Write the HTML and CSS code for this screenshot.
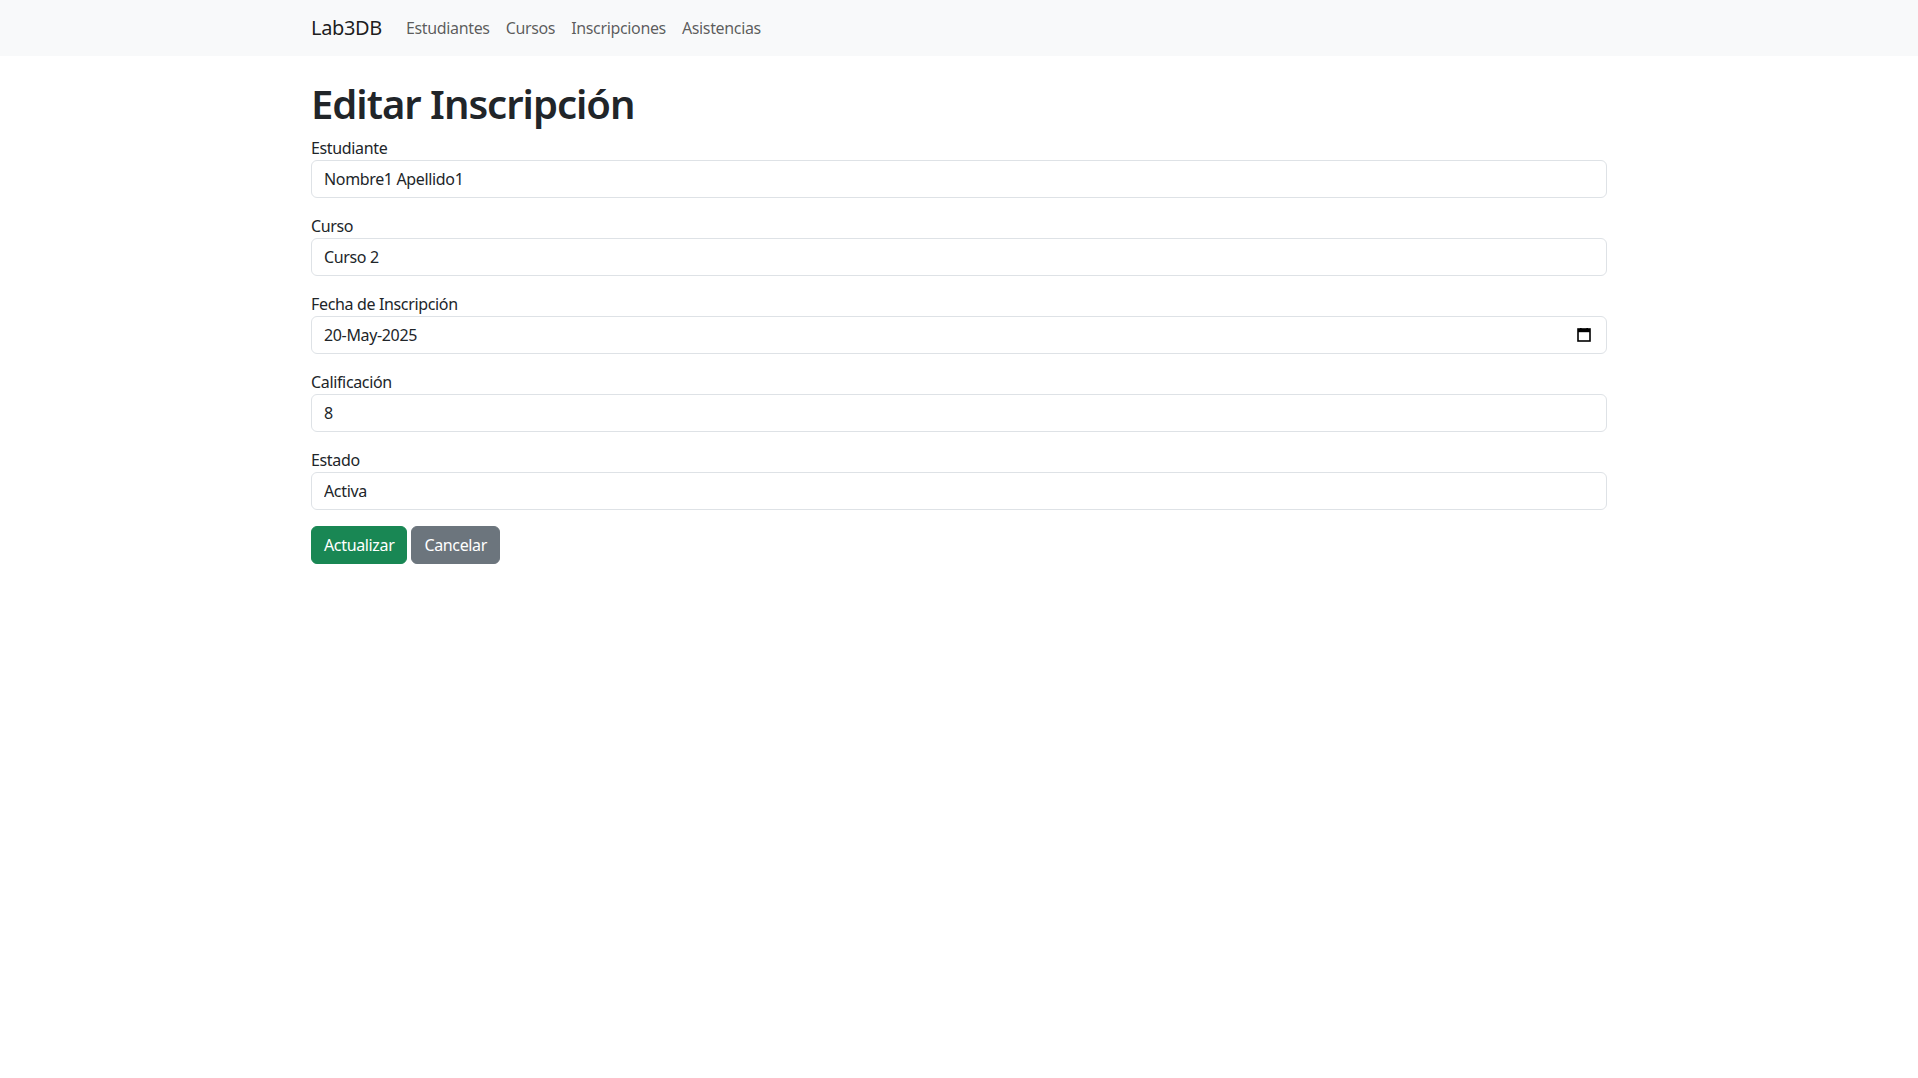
FILE: index.html
```html
<!DOCTYPE html>
<html lang="es">
<head>
<meta charset="utf-8">
<title>Editar Inscripción - Lab3DB</title>
<link rel="stylesheet" href="styles.css">
</head>
<body>
<nav class="navbar">
  <div class="container nav-inner">
    <a class="brand" href="#">Lab3DB</a>
    <ul class="nav-links">
      <li><a href="#">Estudiantes</a></li>
      <li><a href="#">Cursos</a></li>
      <li><a href="#">Inscripciones</a></li>
      <li><a href="#">Asistencias</a></li>
    </ul>
  </div>
</nav>
<main class="container main">
  <h1 class="title">Editar Inscripción</h1>
  <form class="form">
    <div class="field">
      <label for="est">Estudiante</label>
      <input id="est" class="control" type="text" value="Nombre1 Apellido1">
    </div>
    <div class="field">
      <label for="cur">Curso</label>
      <input id="cur" class="control" type="text" value="Curso 2">
    </div>
    <div class="field">
      <label for="fec">Fecha de Inscripción</label>
      <div class="control date-control">
        <span id="fec" class="date-value">20-May-2025</span>
        <svg class="cal-icon" width="14" height="14" viewBox="0 0 14 14" aria-hidden="true">
          <rect x="1" y="1" width="12" height="12" fill="none" stroke="#000" stroke-width="1.6"/>
          <rect x="1" y="1" width="12" height="3.2" fill="#000"/>
          <rect x="3" y="0" width="1.6" height="2" fill="#000"/>
          <rect x="9.4" y="0" width="1.6" height="2" fill="#000"/>
        </svg>
      </div>
    </div>
    <div class="field">
      <label for="cal">Calificación</label>
      <input id="cal" class="control" type="text" value="8">
    </div>
    <div class="field">
      <label for="esta">Estado</label>
      <input id="esta" class="control" type="text" value="Activa">
    </div>
    <div class="actions">
      <button type="button" class="btn btn-success">Actualizar</button>
      <a href="#" class="btn btn-secondary">Cancelar</a>
    </div>
  </form>
</main>
</body>
</html>
```
FILE: styles.css
```css
* { box-sizing: border-box; }
html, body { margin: 0; padding: 0; }
body {
  font-family: "Segoe UI", "Noto Sans", "Liberation Sans", sans-serif;
  font-size: 16px;
  line-height: 1.5;
  color: #212529;
  background: #fff;
  letter-spacing: -0.35px;
}
.container {
  width: 1320px;
  margin: 0 auto;
  padding: 0 12px;
}
.navbar {
  background: #f8f9fa;
  padding: 8px 0;
}
.nav-inner {
  display: flex;
  align-items: center;
}
.brand {
  font-size: 20px;
  line-height: 30px;
  padding: 5px 0;
  margin-right: 16px;
  color: rgba(0,0,0,.9);
  text-decoration: none;
}
.nav-links {
  display: flex;
  list-style: none;
  margin: 0;
  padding: 0;
}
.nav-links a {
  display: block;
  padding: 8px;
  color: rgba(0,0,0,.65);
  text-decoration: none;
}
.main { margin-top: 24px; }
.title {
  font-size: 40px;
  font-weight: 600;
  line-height: 1.2;
  margin: 0 0 8px;
  letter-spacing: -1px;
}
.field { margin-bottom: 16px; }
.field label { display: inline-block; }
.control {
  display: block;
  width: 100%;
  height: 38px;
  padding: 6px 12px;
  font: inherit;
  font-size: 16px;
  line-height: 1.5;
  letter-spacing: -0.35px;
  color: #212529;
  background: #fff;
  border: 1px solid #dee2e6;
  border-radius: 6px;
  outline: none;
}
.date-control {
  display: flex;
  align-items: center;
  justify-content: space-between;
  padding-right: 15px;
}
.cal-icon { display: block; }
.actions { display: flex; gap: 4px; }
.btn {
  display: inline-block;
  height: 38px;
  padding: 6px 12px;
  font: inherit;
  font-size: 16px;
  line-height: 1.5;
  letter-spacing: -0.35px;
  color: #fff;
  border: 1px solid transparent;
  border-radius: 6px;
  text-decoration: none;
  cursor: pointer;
}
.btn-success { background: #198754; border-color: #198754; }
.btn-secondary { background: #6c757d; border-color: #6c757d; }
```
